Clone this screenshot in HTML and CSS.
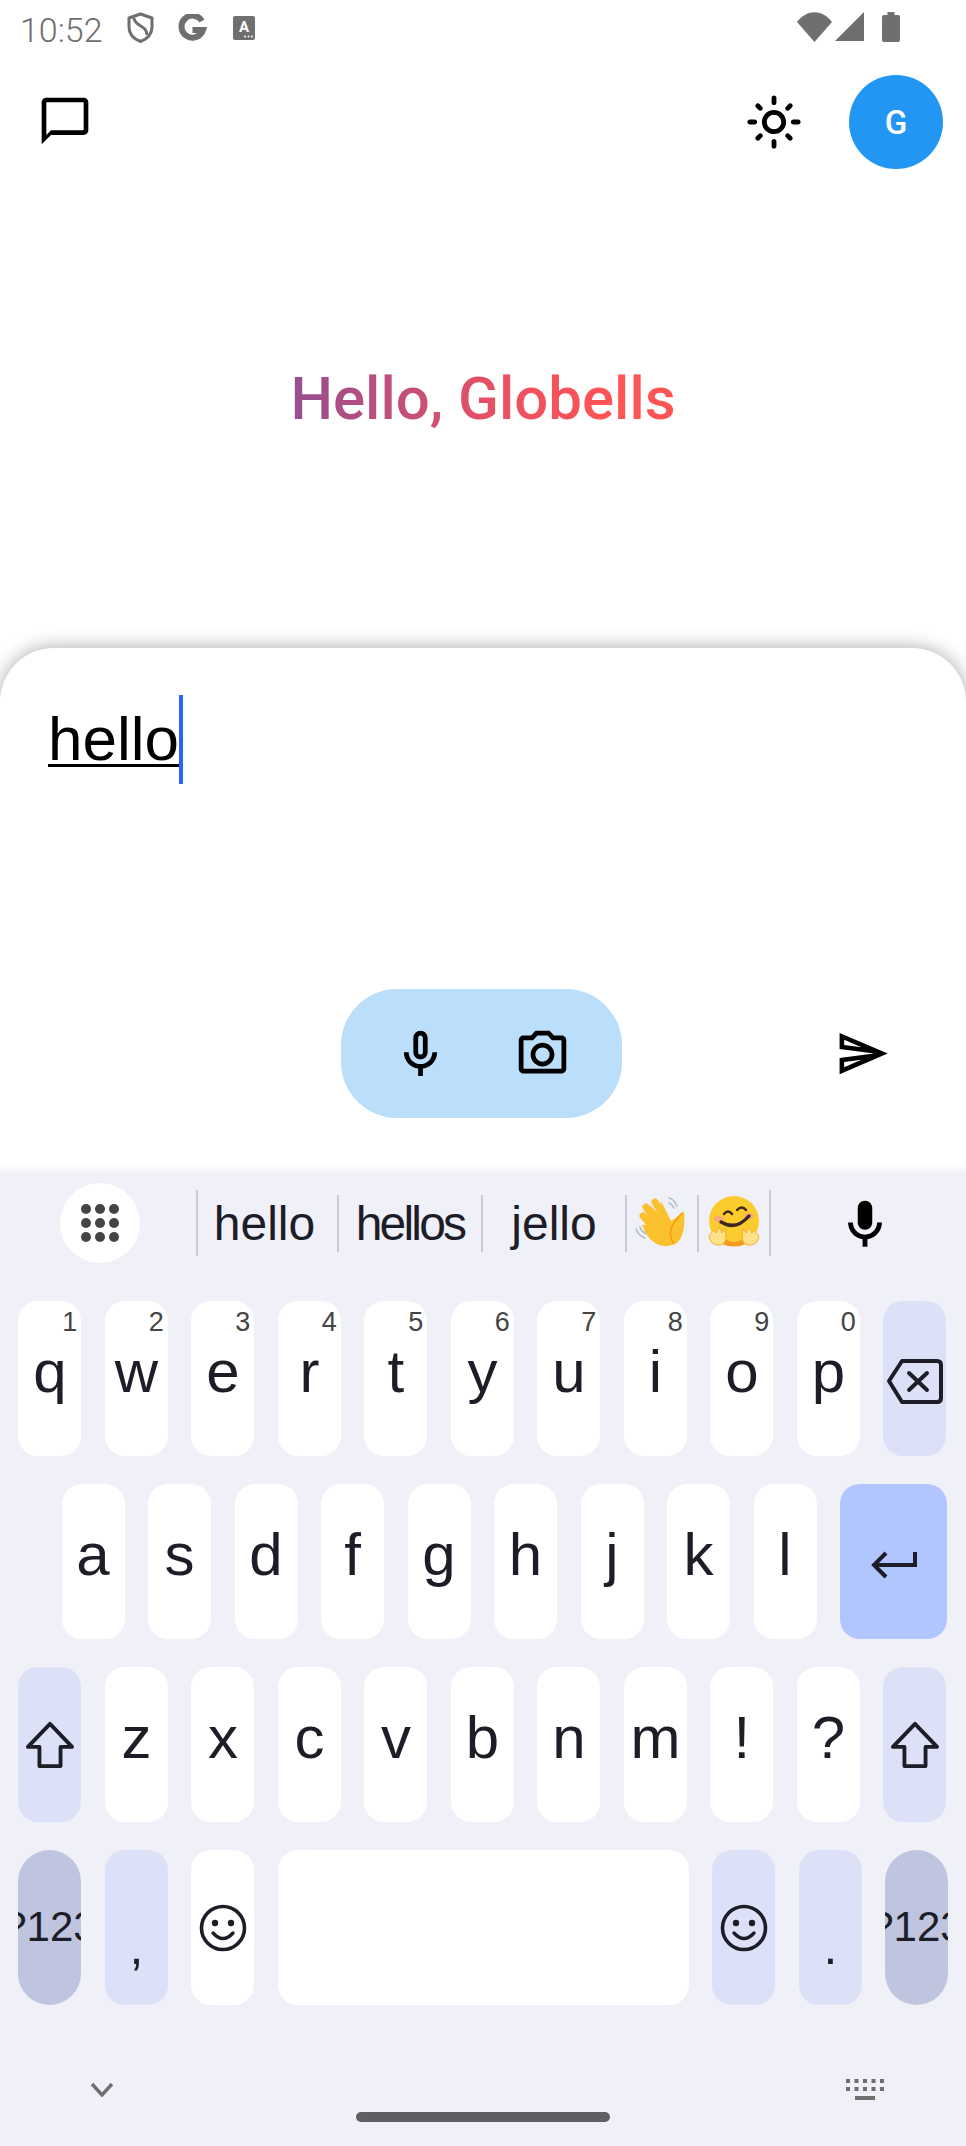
FILE: index.html
```html
<!DOCTYPE html>
<html lang="en">

<head>
    <meta charset="UTF-8">
    <meta name="viewport" content="width=device-width, initial-scale=1.0">
    <title>Hello, Globells</title>
    <link rel="stylesheet" href="styles.css">
</head>

<body>

    <!-- Status bar -->
    <div class="status-bar">
        <span class="clock">10:52</span>
        <svg class="st-shield" width="27" height="31" viewBox="0 0 27 31">
            <path d="M13.5 2 L25 6 V15 C25 22 20 27 13.5 29.5 C7 27 2 22 2 15 V6 Z" fill="none" stroke="#6f6f6f" stroke-width="3" stroke-linejoin="round"/>
            <path d="M7 6 C7 14 20 13 20 23" fill="none" stroke="#6f6f6f" stroke-width="3"/>
        </svg>
        <svg class="st-g" width="29" height="28" viewBox="0 0 29 28">
            <path d="M24 7 A11 11 0 1 0 25 16 H14.5" fill="none" stroke="#6f6f6f" stroke-width="6"/>
        </svg>
        <svg class="st-a" width="22" height="24" viewBox="0 0 22 24">
            <rect width="22" height="24" rx="2" fill="#6f6f6f"/>
            <text x="11" y="16" text-anchor="middle" class="st-a-text">A</text>
            <circle cx="12" cy="20.5" r="1" fill="#fff"/>
            <circle cx="15.5" cy="20.5" r="1" fill="#fff"/>
            <circle cx="19" cy="20.5" r="1" fill="#fff"/>
        </svg>
        <div class="status-right">
            <svg width="35" height="30" viewBox="0 0 35 30"><path d="M0 10 C10 -3 25 -3 35 10 L17.5 30 Z" fill="#6f6f6f"/></svg>
            <svg width="29" height="29" viewBox="0 0 29 29"><path d="M29 0 V29 H0 Z" fill="#6f6f6f"/></svg>
            <svg class="st-battery" width="18" height="30" viewBox="0 0 18 30"><path d="M5.5 0 H12.5 V3 H16 Q18 3 18 5 V28 Q18 30 16 30 H2 Q0 30 0 28 V5 Q0 3 2 3 H5.5 Z" fill="#6f6f6f"/></svg>
        </div>
    </div>

    <!-- App bar -->
    <div class="app-bar">
        <svg class="chat-icon" width="56" height="56" viewBox="0 0 24 24"><path d="M20 2H4c-1.1 0-2 .9-2 2v18l4-4h14c1.1 0 2-.9 2-2V4c0-1.1-.9-2-2-2zm0 14H6l-2 2V4h16v12z"/></svg>
        <svg class="sun-icon" width="58" height="58" viewBox="0 0 24 24"><path d="M12 9c1.65 0 3 1.35 3 3s-1.35 3-3 3-3-1.35-3-3 1.35-3 3-3m0-2c-2.76 0-5 2.24-5 5s2.24 5 5 5 5-2.24 5-5-2.24-5-5-5zM2 13h2c.55 0 1-.45 1-1s-.45-1-1-1H2c-.55 0-1 .45-1 1s.45 1 1 1zm18 0h2c.55 0 1-.45 1-1s-.45-1-1-1h-2c-.55 0-1 .45-1 1s.45 1 1 1zM11 2v2c0 .55.45 1 1 1s1-.45 1-1V2c0-.55-.45-1-1-1s-1 .45-1 1zm0 18v2c0 .55.45 1 1 1s1-.45 1-1v-2c0-.55-.45-1-1-1s-1 .45-1 1zM5.99 4.58c-.39-.39-1.03-.39-1.41 0-.39.39-.39 1.03 0 1.41l1.06 1.06c.39.39 1.03.39 1.41 0s.39-1.03 0-1.41L5.99 4.58zm12.37 12.37c-.39-.39-1.03-.39-1.41 0-.39.39-.39 1.03 0 1.41l1.06 1.06c.39.39 1.03.39 1.41 0 .39-.39.39-1.03 0-1.41l-1.06-1.06zm1.06-10.96c.39-.39.39-1.03 0-1.41-.39-.39-1.03-.39-1.41 0l-1.06 1.06c-.39.39-.39 1.03 0 1.41s1.03.39 1.41 0l1.06-1.06zM7.05 18.36c.39-.39.39-1.03 0-1.41-.39-.39-1.03-.39-1.41 0l-1.06 1.06c-.39.39-.39 1.03 0 1.41s1.03.39 1.41 0l1.06-1.06z"/></svg>
        <div class="avatar">G</div>
    </div>

    <!-- Greeting -->
    <div class="greeting-wrap">
        <span class="greeting">Hello, Globells</span>
    </div>

    <!-- Prompt sheet -->
    <div class="sheet">
        <div class="prompt"><span class="prompt-text">hello</span><span class="caret"></span></div>
        <div class="sheet-actions">
            <div class="pill">
                <svg width="57" height="57" viewBox="0 0 24 24"><path d="M12 14c1.66 0 3-1.34 3-3V5c0-1.66-1.34-3-3-3S9 3.34 9 5v6c0 1.66 1.34 3 3 3zm-1-9c0-.55.45-1 1-1s1 .45 1 1v6c0 .55-.45 1-1 1s-1-.45-1-1V5zm6 6c0 2.76-2.24 5-5 5s-5-2.24-5-5H5c0 3.53 2.61 6.43 6 6.92V21h2v-3.08c3.39-.49 6-3.39 6-6.92h-2z"/></svg>
                <svg width="57" height="57" viewBox="0 0 24 24"><path d="M14.12 4l1.83 2H20v12H4V6h4.05l1.83-2h4.24M15 2H9L7.17 4H4c-1.1 0-2 .9-2 2v12c0 1.1.9 2 2 2h16c1.1 0 2-.9 2-2V6c0-1.1-.9-2-2-2h-3.17L15 2zm-3 7c1.65 0 3 1.35 3 3s-1.35 3-3 3-3-1.35-3-3 1.35-3 3-3m0-2c-2.76 0-5 2.24-5 5s2.24 5 5 5 5-2.24 5-5-2.24-5-5-5z"/></svg>
            </div>
            <svg class="send-icon" width="55" height="55" viewBox="0 0 24 24"><path d="M4.01 6.03l7.51 3.22-7.52-1 .01-2.22m7.5 8.72L4 17.97v-2.22l7.51-1M2.01 3L2 10l15 2-15 2 .01 7L23 12 2.01 3z"/></svg>
        </div>
    </div>

    <!-- Keyboard -->
    <div class="keyboard">
        <div class="strip">
            <div class="apps-btn">
                <svg width="38" height="38" viewBox="0 0 38 38" fill="#444">
                    <circle cx="5" cy="5" r="5"/><circle cx="19" cy="5" r="5"/><circle cx="33" cy="5" r="5"/>
                    <circle cx="5" cy="19" r="5"/><circle cx="19" cy="19" r="5"/><circle cx="33" cy="19" r="5"/>
                    <circle cx="5" cy="33" r="5"/><circle cx="19" cy="33" r="5"/><circle cx="33" cy="33" r="5"/>
                </svg>
            </div>
            <span class="sep tall"></span>
            <span class="word w1">hello</span>
            <span class="sep"></span>
            <span class="word w2">hellos</span>
            <span class="sep"></span>
            <span class="word w3">jello</span>
            <span class="sep"></span>
            <span class="emoji">
                <svg width="56" height="56" viewBox="12 12 56 56">
                    <path d="M14 46 Q16 52 23 55 M18 44 Q19 48 24 51" fill="none" stroke="#b0bec5" stroke-width="1.6" stroke-linecap="round"/>
                    <path d="M47 15 Q52 16 55 23 M47 20 Q50 21 52 25" fill="none" stroke="#b0bec5" stroke-width="1.6" stroke-linecap="round"/>
                    <path d="M37 62 Q26 58 20 42 L27 42 L22 30 L30 35 L28 22 L38 32 L39 18 L49 38 L55 34 L62 28 Q64 52 55 60 Q47 65 37 62 Z" fill="#fbc02d"/>
                    <g stroke="#fbc02d" stroke-width="7" stroke-linecap="round">
                        <path d="M21 33 L35 49"/><path d="M24 24 L39 46"/><path d="M33 19 L47 42"/>
                    </g>
                    <path d="M60 30 Q52 38 49 46 Q47 54 52 61" fill="none" stroke="#f29f05" stroke-width="1.4"/>
                </svg>
            </span>
            <span class="sep"></span>
            <span class="emoji">
                <svg width="58" height="56" viewBox="81 12 58 56">
                    <circle cx="110" cy="38" r="25" fill="#fccb2e"/>
                    <path d="M95 50 Q110 68 125 50 L122 61 Q110 66 98 61 Z" fill="#f59a1f"/>
                    <ellipse cx="95" cy="36" rx="5" ry="3" fill="#f8a77a"/>
                    <ellipse cx="125" cy="33" rx="5" ry="3" fill="#f8a77a"/>
                    <path d="M100 31 Q104 26 108 31 M113 27 Q118 22 122 27" fill="none" stroke="#3e2723" stroke-width="2.4" stroke-linecap="round"/>
                    <path d="M97 39 Q112 48 125 33" fill="none" stroke="#3e2723" stroke-width="3.4" stroke-linecap="round"/>
                    <path d="M85 53 L90 47 L92 50 L95 44 L98 50 L101 45 L102 56 Q100 63 93 62 Q86 61 85 53 Z" fill="#fde28a" stroke="#f3b02c" stroke-width="1"/>
                    <path d="M135 53 L130 47 L128 50 L125 44 L122 50 L119 45 L118 56 Q120 63 127 62 Q134 61 135 53 Z" fill="#fde28a" stroke="#f3b02c" stroke-width="1"/>
                </svg>
            </span>
            <span class="sep tall"></span>
            <svg class="strip-mic" width="58" height="58" viewBox="0 0 24 24"><path d="M12 14c1.66 0 3-1.34 3-3V5c0-1.66-1.34-3-3-3S9 3.34 9 5v6c0 1.66 1.34 3 3 3zm5-3c0 2.76-2.24 5-5 5s-5-2.24-5-5H5c0 3.53 2.61 6.43 6 6.92V21h2v-3.08c3.39-.49 6-3.39 6-6.92h-2z"/></svg>
        </div>

        <div class="key-row">
            <div class="key"><span class="num">1</span>q</div>
            <div class="key"><span class="num">2</span>w</div>
            <div class="key"><span class="num">3</span>e</div>
            <div class="key"><span class="num">4</span>r</div>
            <div class="key"><span class="num">5</span>t</div>
            <div class="key"><span class="num">6</span>y</div>
            <div class="key"><span class="num">7</span>u</div>
            <div class="key"><span class="num">8</span>i</div>
            <div class="key"><span class="num">9</span>o</div>
            <div class="key"><span class="num">0</span>p</div>
            <div class="key side icon-key">
                <svg width="58" height="47" viewBox="0 0 58 47" fill="none" stroke="#1d1d28" stroke-width="4" stroke-linejoin="round">
                    <path d="M3 23 L16 3 H51 Q55 3 55 7 V40 Q55 44 51 44 H16 Z"/>
                    <path d="M23 15 L41 32 M41 15 L23 32" stroke-linecap="round"/>
                </svg>
            </div>
        </div>

        <div class="key-row row-home">
            <div class="key">a</div>
            <div class="key">s</div>
            <div class="key">d</div>
            <div class="key">f</div>
            <div class="key">g</div>
            <div class="key">h</div>
            <div class="key">j</div>
            <div class="key">k</div>
            <div class="key">l</div>
            <div class="key enter icon-key">
                <svg width="47" height="30" viewBox="0 0 47 30" fill="none" stroke="#1d1d28" stroke-width="4">
                    <path d="M45 2 V15 H4"/>
                    <path d="M16 3 L4 15 L16 27"/>
                </svg>
            </div>
        </div>

        <div class="key-row">
            <div class="key side icon-key shift">
                <svg width="50" height="48" viewBox="0 0 52 50" fill="none" stroke="#1d1d28" stroke-width="4" stroke-linejoin="round">
                    <path d="M26 3 L49 27 H37 V47 H15 V27 H3 Z"/>
                </svg>
            </div>
            <div class="key">z</div>
            <div class="key">x</div>
            <div class="key">c</div>
            <div class="key">v</div>
            <div class="key">b</div>
            <div class="key">n</div>
            <div class="key">m</div>
            <div class="key">!</div>
            <div class="key">?</div>
            <div class="key side icon-key shift">
                <svg width="50" height="48" viewBox="0 0 52 50" fill="none" stroke="#1d1d28" stroke-width="4" stroke-linejoin="round">
                    <path d="M26 3 L49 27 H37 V47 H15 V27 H3 Z"/>
                </svg>
            </div>
        </div>

        <div class="key-row">
            <div class="key symbols">?123</div>
            <div class="key side punct">,</div>
            <div class="key icon-key smile">
                <svg width="48" height="48" viewBox="0 0 48 48">
                    <circle cx="24" cy="24" r="21.5" fill="none" stroke="#1d1d28" stroke-width="3.6"/>
                    <circle cx="16" cy="19" r="3.2" fill="#1d1d28"/>
                    <circle cx="32" cy="19" r="3.2" fill="#1d1d28"/>
                    <path d="M14 29 Q24 40 34 29" fill="none" stroke="#1d1d28" stroke-width="3.4" stroke-linecap="round"/>
                </svg>
            </div>
            <div class="key space"></div>
            <div class="key side icon-key smile">
                <svg width="48" height="48" viewBox="0 0 48 48">
                    <circle cx="24" cy="24" r="21.5" fill="none" stroke="#1d1d28" stroke-width="3.6"/>
                    <circle cx="16" cy="19" r="3.2" fill="#1d1d28"/>
                    <circle cx="32" cy="19" r="3.2" fill="#1d1d28"/>
                    <path d="M14 29 Q24 40 34 29" fill="none" stroke="#1d1d28" stroke-width="3.4" stroke-linecap="round"/>
                </svg>
            </div>
            <div class="key side punct">.</div>
            <div class="key symbols">?123</div>
        </div>

        <!-- Bottom of keyboard -->
        <div class="kb-footer">
            <svg width="24" height="15" viewBox="0 0 24 15"><path d="M2 2 L12 13 L22 2" fill="none" stroke="#6f6f6f" stroke-width="3.4"/></svg>
            <svg width="38" height="21" viewBox="0 0 38 21" fill="#6f6f6f">
                <rect x="0" y="0" width="4" height="4"/><rect x="8.5" y="0" width="4" height="4"/><rect x="17" y="0" width="4" height="4"/><rect x="25.5" y="0" width="4" height="4"/><rect x="34" y="0" width="4" height="4"/>
                <rect x="0" y="8" width="4" height="4"/><rect x="8.5" y="8" width="4" height="4"/><rect x="17" y="8" width="4" height="4"/><rect x="25.5" y="8" width="4" height="4"/><rect x="34" y="8" width="4" height="4"/>
                <rect x="9" y="17" width="20" height="4"/>
            </svg>
        </div>
        <div class="home-bar"></div>
    </div>

</body>

</html>
```

FILE: styles.css
```css
* {
    box-sizing: border-box;
}

body {
    font-family: Roboto, Arial, sans-serif;
    background-color: white;
    margin: 0;
    padding: 0;
    width: 966px;
    height: 2146px;
    overflow: hidden;
    display: flex;
    flex-direction: column;
}

svg {
    display: block;
    flex-shrink: 0;
}

/* Status bar */
.status-bar {
    height: 60px;
    padding: 12px 66px 0 20px;
    display: flex;
    align-items: flex-start;
    color: #6f6f6f;
}

.clock {
    font-size: 34px;
    line-height: 36px;
    font-weight: 300;
    width: 107px;
}

.st-shield {
    margin-right: 24px;
}

.st-g {
    margin-top: 2px;
    margin-right: 26px;
}

.st-a {
    margin-top: 4px;
}

.st-a-text {
    font-family: Roboto, sans-serif;
    font-size: 15px;
    font-weight: 700;
    fill: white;
}

.status-right {
    margin-left: auto;
    display: flex;
    gap: 3px;
}

.st-battery {
    margin-left: 15px;
}

/* App bar */
.app-bar {
    height: 109px;
    margin-top: 15px;
    padding-right: 23px;
    display: flex;
    align-items: flex-start;
}

.chat-icon {
    margin: 18px 0 0 37px;
}

.sun-icon {
    margin: 18px 0 0 auto;
}

.avatar {
    width: 94px;
    height: 94px;
    margin-left: 46px;
    border-radius: 50%;
    background-color: #2196f3;
    color: white;
    font-size: 33px;
    font-weight: 500;
    display: flex;
    justify-content: center;
    align-items: center;
}

/* Greeting */
.greeting-wrap {
    height: 464px;
    padding-top: 180px;
    display: flex;
    justify-content: center;
    align-items: flex-start;
}

.greeting {
    font-size: 60px;
    line-height: 70px;
    font-weight: 500;
    background: linear-gradient(90deg, #964e8f, #ec5062 55%, #ff5454 85%);
    -webkit-background-clip: text;
    background-clip: text;
    color: transparent;
}

/* Prompt sheet */
.sheet {
    height: 516px;
    background-color: white;
    border-radius: 54px 54px 0 0;
    box-shadow: 0 -1px 18px rgba(0, 0, 0, 0.32);
    position: relative;
    padding-top: 47px;
}

.prompt {
    height: 294px;
    padding-left: 48px;
    display: flex;
    align-items: flex-start;
    font-family: "Liberation Sans", Arial, sans-serif;
}

.prompt-text {
    font-size: 62px;
    line-height: 78px;
    margin-top: 5px;
    height: 67px;
    color: black;
    border-bottom: 3px solid black;
}

.caret {
    width: 4px;
    height: 89px;
    background-color: #2962ff;
}

.sheet-actions {
    display: flex;
    align-items: flex-start;
}

.pill {
    width: 281px;
    height: 129px;
    margin-left: 341px;
    padding: 37px 0 0 51px;
    border-radius: 56px;
    background-color: #bbdefb;
    display: flex;
    align-items: flex-start;
    gap: 65px;
}

.send-icon {
    margin: 37px 0 0 213px;
}

/* Keyboard */
.keyboard {
    height: 982px;
    position: relative;
    background: linear-gradient(#ffffff, #f0f0f8 10px);
    color: #1d1d28;
    font-family: "Liberation Sans", Arial, sans-serif;
}

.strip {
    height: 137px;
    padding: 19px 0 0 60px;
    display: flex;
    align-items: flex-start;
}

.apps-btn {
    width: 80px;
    height: 80px;
    border-radius: 50%;
    background-color: white;
    display: flex;
    justify-content: center;
    align-items: center;
}

.sep {
    width: 2px;
    height: 57px;
    margin-top: 12px;
    background-color: #c9cad6;
}

.sep.tall {
    height: 66px;
    margin-top: 7px;
}

.apps-btn + .sep {
    margin-left: 56px;
}

.word {
    font-size: 48px;
    line-height: 60px;
    margin-top: 11px;
    text-align: center;
}

.w1 {
    width: 139px;
    padding-right: 6px;
}

.w2 {
    width: 142px;
    letter-spacing: -2.8px;
}

.w3 {
    width: 142px;
}

.emoji {
    width: 70px;
    margin-top: 12px;
    display: flex;
    justify-content: center;
}

.strip-mic {
    margin: 13px 0 0 65px;
}

/* Keys */
.key-row {
    padding-left: 18.4px;
    margin-bottom: 28px;
    display: flex;
    gap: 23.5px;
}

.row-home {
    padding-left: 61.5px;
}

.key {
    width: 63px;
    height: 155px;
    padding-top: 36px;
    border-radius: 20px;
    background-color: white;
    font-size: 60px;
    line-height: 70px;
    position: relative;
    overflow: hidden;
    flex-shrink: 0;
    display: flex;
    justify-content: center;
    align-items: flex-start;
}

.num {
    position: absolute;
    top: 6px;
    right: 4px;
    font-size: 27px;
    line-height: 30px;
    color: #444;
}

.side {
    background-color: #dde1f8;
}

.enter {
    width: 107px;
    background-color: #b1c5ff;
}

.icon-key {
    padding-top: 57px;
}

.enter.icon-key {
    padding-top: 66px;
}

.shift.icon-key {
    padding-top: 54px;
}

.smile.icon-key {
    padding-top: 54px;
}

.space {
    width: 411px;
}

.symbols {
    border-radius: 32px;
    background-color: #bfc5de;
    font-size: 42px;
    line-height: 50px;
    padding-top: 52px;
    white-space: nowrap;
}

.punct {
    font-size: 50px;
    padding-top: 62px;
}

/* Bottom of keyboard */
.kb-footer {
    margin-top: 74px;
    padding: 0 82px 0 90px;
    display: flex;
    justify-content: space-between;
    align-items: center;
}

.home-bar {
    width: 254px;
    height: 10px;
    margin: 12px auto 0;
    border-radius: 5px;
    background-color: #5f5f63;
}
```
